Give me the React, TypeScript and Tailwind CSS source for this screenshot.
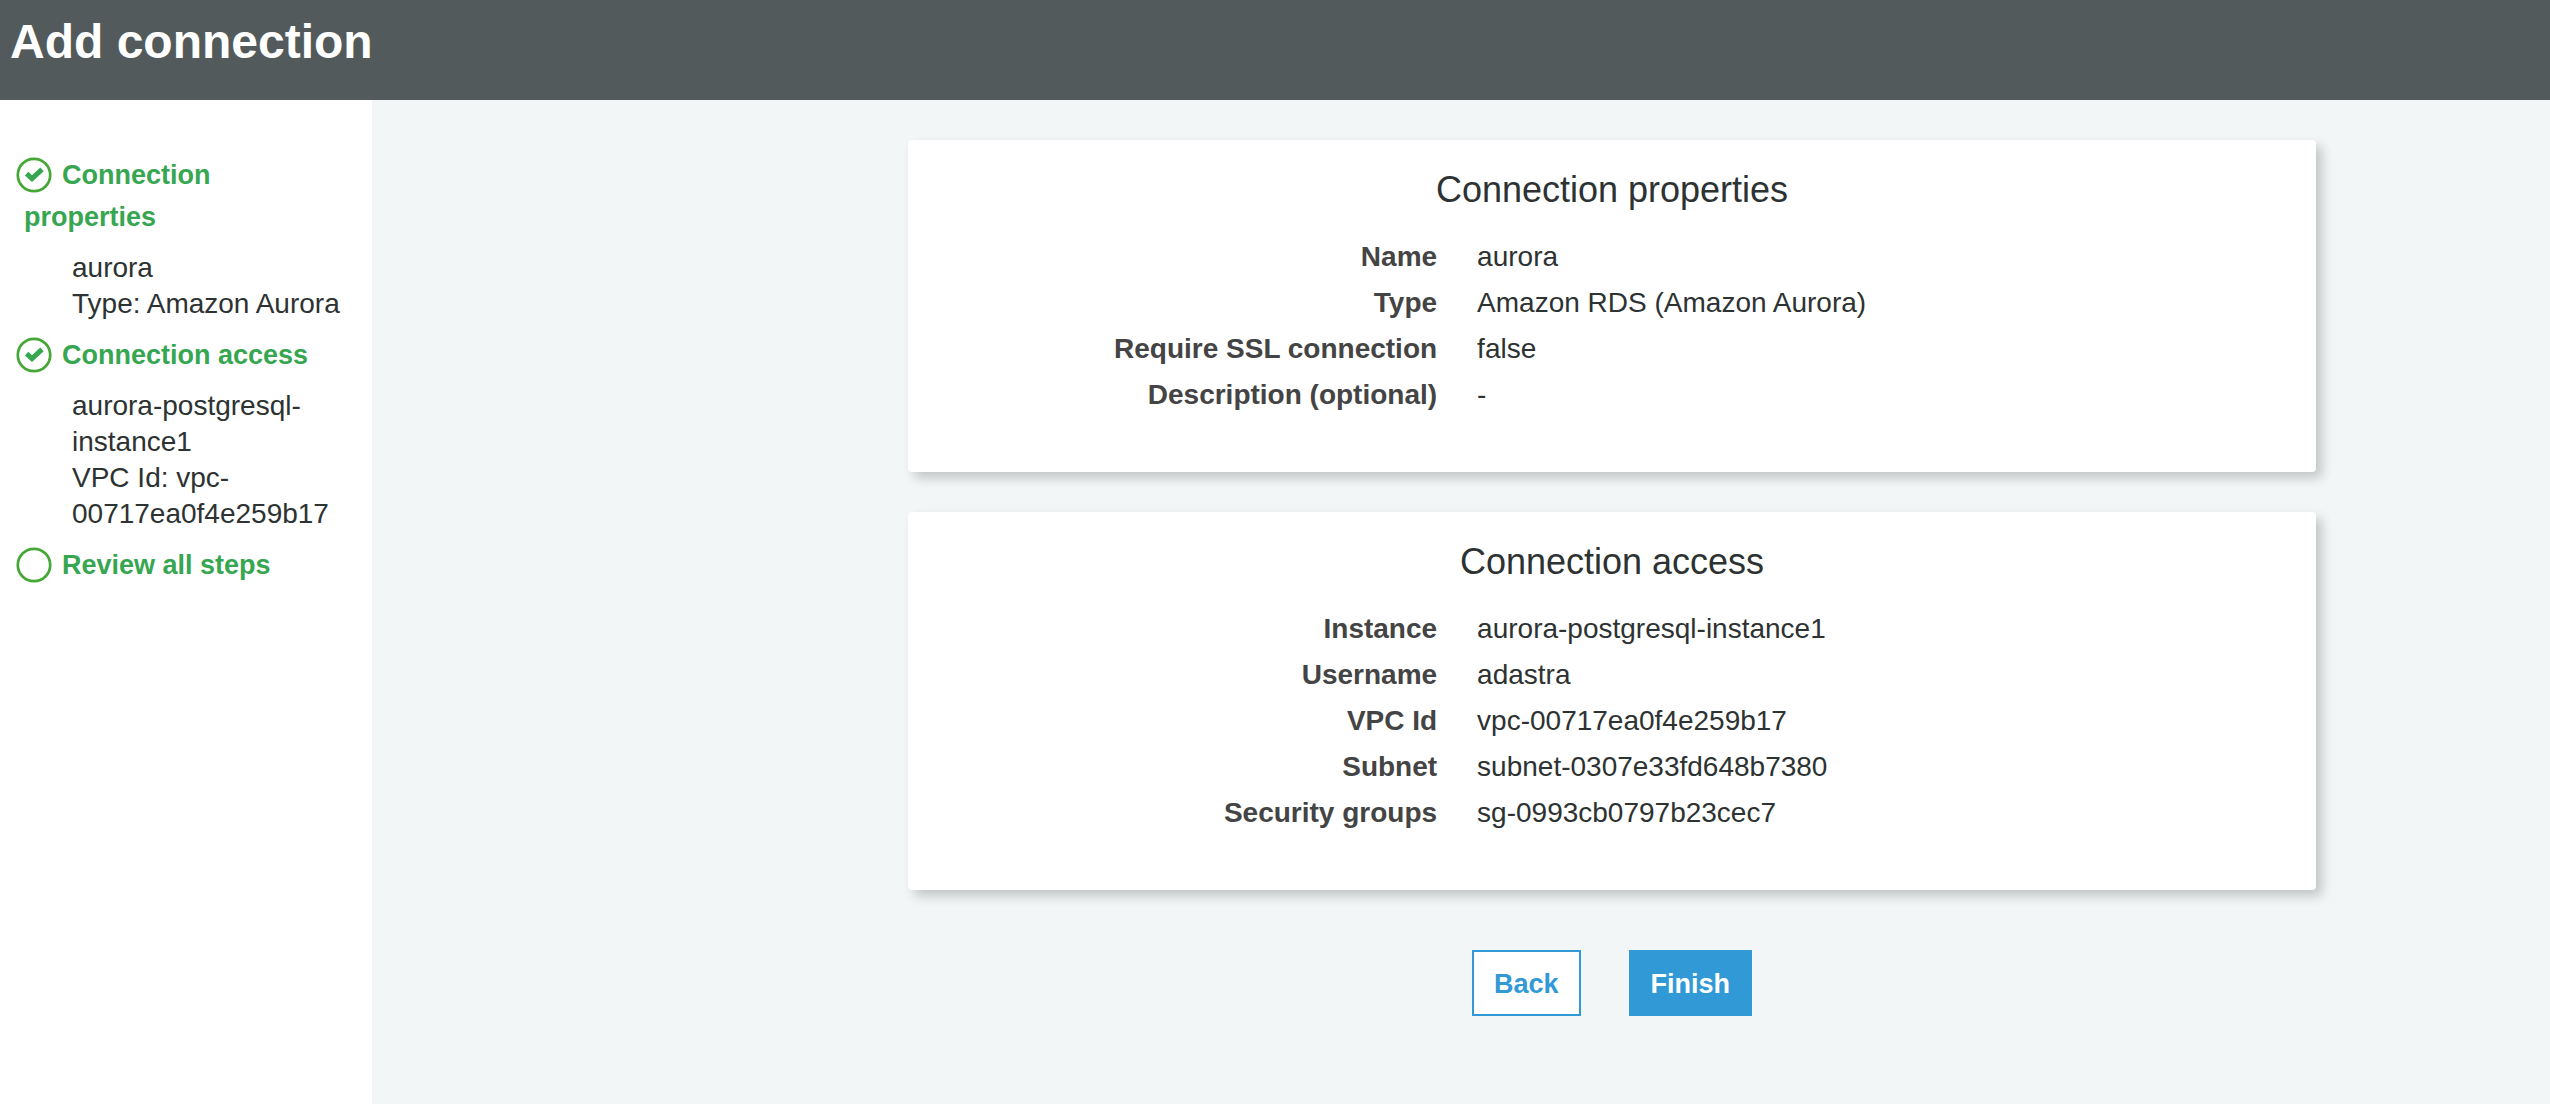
type Field = { label: string; value: string };
type Step = { title: string; done: boolean; details: string[] };

const steps: Step[] = [
  { title: "Connection properties", done: true, details: ["aurora", "Type: Amazon Aurora"] },
  {
    title: "Connection access",
    done: true,
    details: ["aurora-postgresql-instance1", "VPC Id: vpc-00717ea0f4e259b17"],
  },
  { title: "Review all steps", done: false, details: [] },
];

const properties: Field[] = [
  { label: "Name", value: "aurora" },
  { label: "Type", value: "Amazon RDS (Amazon Aurora)" },
  { label: "Require SSL connection", value: "false" },
  { label: "Description (optional)", value: "-" },
];

const access: Field[] = [
  { label: "Instance", value: "aurora-postgresql-instance1" },
  { label: "Username", value: "adastra" },
  { label: "VPC Id", value: "vpc-00717ea0f4e259b17" },
  { label: "Subnet", value: "subnet-0307e33fd648b7380" },
  { label: "Security groups", value: "sg-0993cb0797b23cec7" },
];

function StepIcon({ done }: { done: boolean }) {
  return (
    <svg viewBox="0 0 36 36" className="-mt-1.5 mr-2.5 -mb-0.5 inline-block size-9 align-middle" aria-hidden="true">
      <circle cx="18" cy="18" r="16.2" fill="none" stroke="#46a636" strokeWidth="2.7" />
      {done && <path d="M10.6 16.6l5.4 5L26 12.4" fill="none" stroke="#37a651" strokeWidth="5" />}
    </svg>
  );
}

function SummaryCard({ title, fields }: { title: string; fields: Field[] }) {
  return (
    <section className="rounded bg-white pt-[27px] pb-[54px] leading-[46px] shadow-[6px_6px_12px_rgba(0,0,0,0.2)]">
      <h2 className="mb-[21px] text-center text-[36px]">{title}</h2>
      <dl className="text-[28px]">
        {fields.map((f) => (
          <div key={f.label} className="grid grid-cols-[39fr_61fr]">
            <dt className="pr-5 text-right font-bold text-[#444444]">{f.label}</dt>
            <dd className="pl-5">{f.value}</dd>
          </div>
        ))}
      </dl>
    </section>
  );
}

export default function App() {
  return (
    <div className="flex min-h-screen flex-col bg-[#f2f6f7] font-['Liberation_Sans',Arial,sans-serif] text-[#2d3232]">
      <header className="bg-[#525a5b] px-2.5 pt-3.5 pb-[30px] text-white">
        <h1 className="text-[48px] leading-[56px] font-bold">Add connection</h1>
      </header>
      <div className="flex flex-1">
        <nav aria-label="Steps" className="w-[372px] shrink-0 bg-white pt-[54px] pr-6">
          <ol>
            {steps.map((s) => (
              <li key={s.title} className="mb-3">
                <a href="#" className="block pl-6 -indent-2 text-[27px] leading-[42px] font-bold text-[#37a651]">
                  <StepIcon done={s.done} />
                  {s.title}
                </a>
                {s.details.length > 0 && (
                  <div className="mt-3 pl-[72px] text-[28px] leading-9">
                    {s.details.map((d) => (
                      <p key={d}>{d}</p>
                    ))}
                  </div>
                )}
              </li>
            ))}
          </ol>
        </nav>
        <main className="grid flex-1 grid-cols-[536fr_1408fr_234fr] content-start py-10">
          <div className="col-start-2 flex flex-col gap-10">
            <SummaryCard title="Connection properties" fields={properties} />
            <SummaryCard title="Connection access" fields={access} />
            <div className="mt-5 flex justify-center gap-12 text-[27px] leading-[42px] font-bold">
              <button type="button" className="border-2 border-[#3199d5] bg-white px-5 pt-[11px] pb-[9px] text-[#3199d5]">
                Back
              </button>
              <button type="button" className="border-2 border-[#3199d5] bg-[#3199d5] px-5 pt-[11px] pb-[9px] text-white">
                Finish
              </button>
            </div>
          </div>
        </main>
      </div>
    </div>
  );
}
